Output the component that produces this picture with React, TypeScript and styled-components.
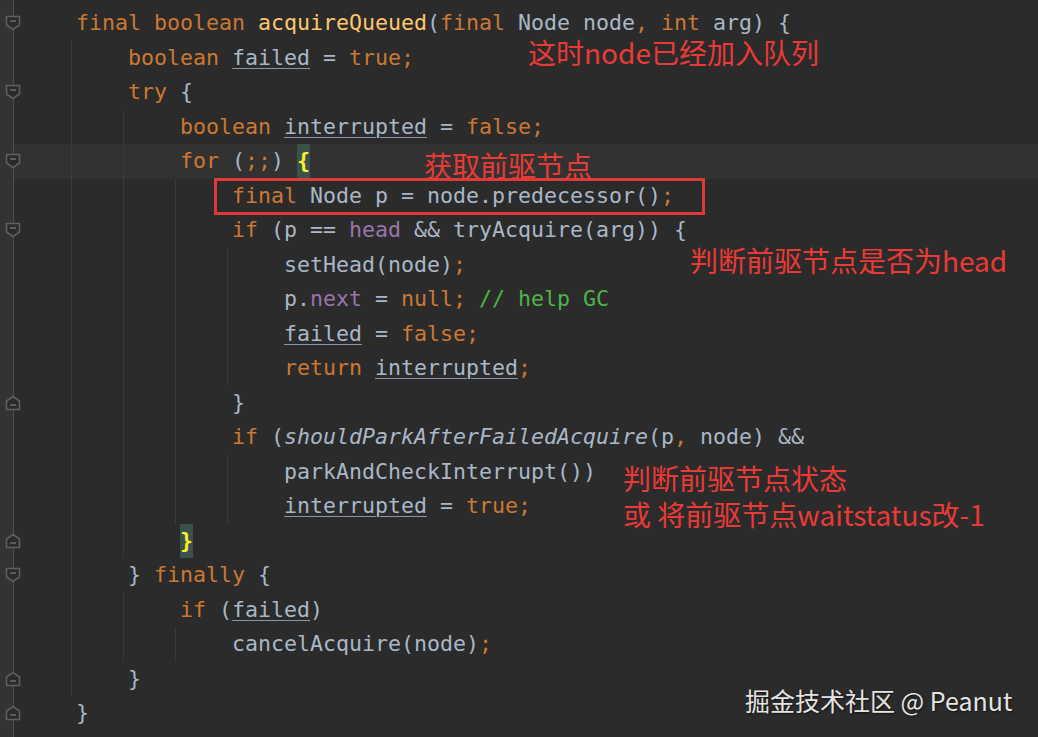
import React from "react";
import styled, { createGlobalStyle, css } from "styled-components";

const GlobalStyle = createGlobalStyle`
  html, body { margin: 0; padding: 0; background: #2b2b2b; }
  body { width: 1038px; height: 737px; overflow: hidden; }
`;

type Kind = "kw" | "id" | "fn" | "field" | "cm" | "it" | "ul" | "br" | "pc";
type Tok = [string, Kind];
type Line = { indent: number; toks: Tok[]; fold?: "open" | "close"; current?: boolean };

const LINES: Line[] = [
  { indent: 1, fold: "open", toks: [["final boolean ", "kw"], ["acquireQueued", "fn"], ["(", "id"], ["final ", "kw"], ["Node node", "id"], [", ", "pc"], ["int ", "kw"], ["arg) {", "id"]] },
  { indent: 2, toks: [["boolean ", "kw"], ["failed", "ul"], [" = ", "id"], ["true;", "kw"]] },
  { indent: 2, fold: "open", toks: [["try ", "kw"], ["{", "id"]] },
  { indent: 3, toks: [["boolean ", "kw"], ["interrupted", "ul"], [" = ", "id"], ["false;", "kw"]] },
  { indent: 3, fold: "open", current: true, toks: [["for ", "kw"], ["(", "id"], [";;", "pc"], [") ", "id"], ["{", "br"]] },
  { indent: 4, toks: [["final ", "kw"], ["Node p = node.predecessor()", "id"], [";", "pc"]] },
  { indent: 4, fold: "open", toks: [["if ", "kw"], ["(p == ", "id"], ["head", "field"], [" && tryAcquire(arg)) {", "id"]] },
  { indent: 5, toks: [["setHead(node)", "id"], [";", "pc"]] },
  { indent: 5, toks: [["p.", "id"], ["next", "field"], [" = ", "id"], ["null; ", "kw"], ["// help GC", "cm"]] },
  { indent: 5, toks: [["failed", "ul"], [" = ", "id"], ["false;", "kw"]] },
  { indent: 5, toks: [["return ", "kw"], ["interrupted", "ul"], [";", "pc"]] },
  { indent: 4, fold: "close", toks: [["}", "id"]] },
  { indent: 4, toks: [["if ", "kw"], ["(", "id"], ["shouldParkAfterFailedAcquire", "it"], ["(p", "id"], [", ", "pc"], ["node) &&", "id"]] },
  { indent: 5, toks: [["parkAndCheckInterrupt())", "id"]] },
  { indent: 5, toks: [["interrupted", "ul"], [" = ", "id"], ["true;", "kw"]] },
  { indent: 3, fold: "close", toks: [["}", "br"]] },
  { indent: 2, fold: "open", toks: [["} ", "id"], ["finally ", "kw"], ["{", "id"]] },
  { indent: 3, toks: [["if ", "kw"], ["(", "id"], ["failed", "ul"], [")", "id"]] },
  { indent: 4, toks: [["cancelAcquire(node)", "id"], [";", "pc"]] },
  { indent: 2, fold: "close", toks: [["}", "id"]] },
  { indent: 1, fold: "close", toks: [["}", "id"]] },
];

const Editor = styled.div`
  position: relative;
  width: 1038px;
  height: 737px;
  background: #2b2b2b;
  padding-top: 6px;
  box-sizing: border-box;
  overflow: hidden;
  background-image: linear-gradient(to right, #313335 0 13px, #4e4e4e 13px 14px, transparent 14px);
`;

const Row = styled.div<{ $current?: boolean }>`
  display: flex;
  height: 34.5px;
  align-items: stretch;
  ${(p) =>
    p.$current &&
    css`
      background: linear-gradient(to right, transparent 0 14px, #323232 14px);
    `}
`;

const GutterCell = styled.div`
  width: 24px;
  flex: none;
  display: flex;
  align-items: center;
  justify-content: flex-start;
  padding-left: 5px;
  box-sizing: border-box;
`;

const Code = styled.div`
  display: flex;
  align-items: stretch;
  font-family: "DejaVu Sans Mono", "Liberation Mono", monospace;
  font-size: 21.6px;
  line-height: 34.5px;
  white-space: pre;
  color: #a9b7c6;
`;

const IndentUnit = styled.span<{ $guide: boolean }>`
  display: inline-block;
  width: 52px;
  height: 34.5px;
  flex: none;
  ${(p) =>
    p.$guide &&
    css`
      background: linear-gradient(to right, transparent 47px, #3a3a3a 47px 48px, transparent 48px);
    `}
`;

const Token = styled.span<{ $kind: Kind }>`
  ${(p) => {
    switch (p.$kind) {
      case "kw":
        return css`color: #cc7832;`;
      case "pc":
        return css`color: #cc7832;`;
      case "fn":
        return css`color: #ffc66d;`;
      case "field":
        return css`color: #9876aa;`;
      case "cm":
        return css`color: #4db548;`;
      case "it":
        return css`color: #a9b7c6; font-style: italic;`;
      case "ul":
        return css`
          color: #a9b7c6;
          text-decoration: underline;
          text-decoration-color: #8a96a3;
          text-decoration-thickness: 1px;
          text-underline-offset: 3px;
        `;
      case "br":
        return css`
          color: #ffef28;
          font-weight: bold;
          background: #3b514d;
          display: inline-block;
          height: 34.5px;
        `;
      default:
        return css`color: #a9b7c6;`;
    }
  }}
`;

const Note = styled.div<{ $x: number; $y: number }>`
  position: absolute;
  left: ${(p) => p.$x}px;
  top: ${(p) => p.$y}px;
  font-family: "Noto Sans CJK SC", "Noto Sans", sans-serif;
  font-size: 28px;
  line-height: 24px;
  color: #ea3a36;
  white-space: pre;
`;

const HighlightBox = styled.div`
  position: absolute;
  left: 214px;
  top: 178px;
  width: 491px;
  height: 37px;
  box-sizing: border-box;
  border: 3px solid #e0393a;
`;

const Watermark = styled.div`
  position: absolute;
  left: 745px;
  top: 688px;
  font-family: "Noto Sans CJK SC", "Noto Sans", sans-serif;
  font-size: 25px;
  line-height: 24px;
  color: #e4e4e4;
  white-space: pre;
  text-shadow: 1px 1px 2px rgba(0, 0, 0, 0.6);
`;

const FoldMarker: React.FC<{ kind: "open" | "close" }> = ({ kind }) => (
  <svg width="16" height="16" viewBox="0 0 16 16">
    <g transform={kind === "close" ? "translate(0 16) scale(1 -1)" : undefined}>
      <path d="M1.5 1.5 H14.5 V10 L8 14.5 L1.5 10 Z" fill="#2b2b2b" stroke="#5f5f5f" strokeWidth="1.6" />
      <line x1="5" y1={6} x2="11" y2={6} stroke="#6a6a6a" strokeWidth="1.6" />
    </g>
  </svg>
);

const CodeLine: React.FC<{ line: Line }> = ({ line }) => (
  <Row $current={line.current}>
    <GutterCell>{line.fold && <FoldMarker kind={line.fold} />}</GutterCell>
    <Code>
      {Array.from({ length: line.indent }).map((_, i) => (
        <IndentUnit key={i} $guide={i < line.indent - 1} />
      ))}
      {line.toks.map(([t, k], i) => (
        <Token key={i} $kind={k}>
          {t}
        </Token>
      ))}
    </Code>
  </Row>
);

export default function App() {
  return (
    <>
      <GlobalStyle />
      <Editor>
        {LINES.map((l, i) => (
          <CodeLine key={i} line={l} />
        ))}
        <HighlightBox />
        <Note $x={528} $y={40}>这时node已经加入队列</Note>
        <Note $x={424} $y={153}>获取前驱节点</Note>
        <Note $x={690} $y={248}>判断前驱节点是否为head</Note>
        <Note $x={623} $y={466}>判断前驱节点状态</Note>
        <Note $x={623} $y={502}>或 将前驱节点waitstatus改-1</Note>
        <Watermark>掘金技术社区 @ Peanut</Watermark>
      </Editor>
    </>
  );
}
